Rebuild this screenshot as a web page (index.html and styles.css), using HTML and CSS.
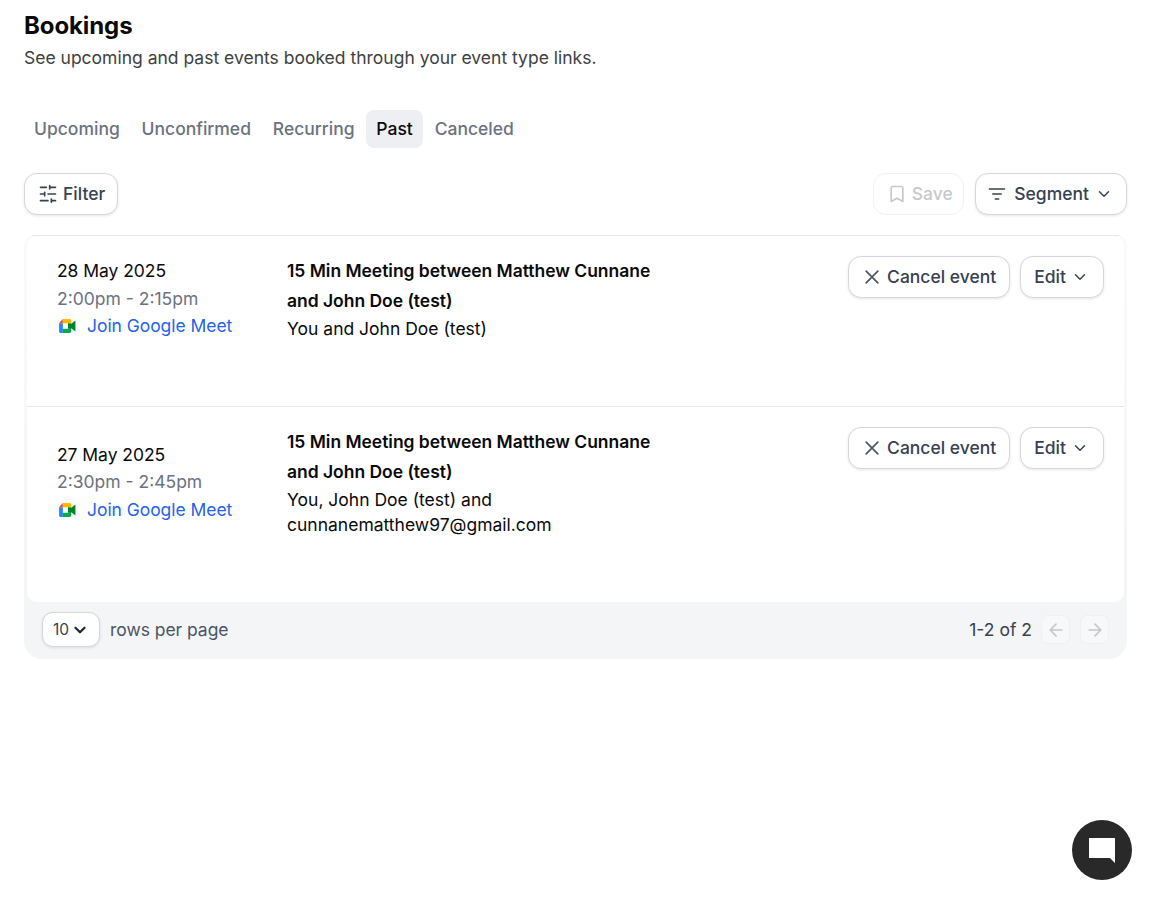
FILE: index.html
```html
<!DOCTYPE html>
<html lang="en">
<head>
<meta charset="utf-8">
<title>Bookings</title>
<link rel="stylesheet" href="styles.css">
</head>
<body>
<main class="page">
  <header class="head">
    <h1 class="title">Bookings</h1>
    <p class="subtitle">See upcoming and past events booked through your event type links.</p>
  </header>
  <nav class="tabs">
    <a class="tab">Upcoming</a>
    <a class="tab">Unconfirmed</a>
    <a class="tab">Recurring</a>
    <a class="tab active">Past</a>
    <a class="tab">Canceled</a>
  </nav>
  <div class="toolbar">
    <button class="btn filter">
      <svg class="ico" viewBox="0 0 24 24"><path d="M21 4h-7M10 4H3M21 12h-9M8 12H3M21 20h-5M12 20H3M14 2v4M8 10v4M16 18v4"/></svg>
      Filter
    </button>
    <div class="toolbar-right">
      <button class="btn save">
        <svg class="ico" viewBox="0 0 24 24"><path d="M19 21l-7-4-7 4V5a2 2 0 0 1 2-2h10a2 2 0 0 1 2 2z"/></svg>
        Save
      </button>
      <button class="btn segment">
        <svg class="ico" viewBox="0 0 24 24"><path d="M3 6h18M7 12h10M10 18h4"/></svg>
        Segment
        <svg class="chev" viewBox="0 0 24 24"><path d="M6 9l6 6 6-6"/></svg>
      </button>
    </div>
  </div>
  <section class="table">
    <div class="rule"></div>
    <div class="rows">
      <article class="row first">
        <div class="when">
          <div class="date">28 May 2025</div>
          <div class="time">2:00pm - 2:15pm</div>
          <a class="meet">
            <svg class="meet-ico" viewBox="0 0 18 15"><path fill="#2684fc" d="M0 4.500V13.500A1.500 1.500 0 0 0 1.500 15H4V4.500z"/><path fill="#ea4335" d="M4 0L0 4.500h4z"/><path fill="#ffba00" d="M4 0h7.500A1.500 1.500 0 0 1 13 1.500V5l-2.500 2-1-2.500H4z"/><path fill="#00ac47" d="M4 10.500h5.500l1-3L13 10v3.500a1.500 1.500 0 0 1-1.500 1.500H4z"/><path fill="#00832d" d="M9.500 4.500h1L13 5l4.500-3.500v12L13 10H9.500z"/></svg>
            Join Google Meet
          </a>
        </div>
        <div class="info">
          <h2 class="event">15 Min Meeting between Matthew Cunnane and John Doe (test)</h2>
          <p class="people">You and John Doe (test)</p>
        </div>
        <div class="actions">
          <button class="btn cancel"><svg class="ico x" viewBox="0 0 24 24"><path d="M5 5l14 14M19 5L5 19"/></svg>Cancel event</button>
          <button class="btn edit">Edit<svg class="chev" viewBox="0 0 24 24"><path d="M6 9l6 6 6-6"/></svg></button>
        </div>
      </article>
      <article class="row second">
        <div class="when">
          <div class="date">27 May 2025</div>
          <div class="time">2:30pm - 2:45pm</div>
          <a class="meet">
            <svg class="meet-ico" viewBox="0 0 18 15"><path fill="#2684fc" d="M0 4.500V13.500A1.500 1.500 0 0 0 1.500 15H4V4.500z"/><path fill="#ea4335" d="M4 0L0 4.500h4z"/><path fill="#ffba00" d="M4 0h7.500A1.500 1.500 0 0 1 13 1.500V5l-2.500 2-1-2.500H4z"/><path fill="#00ac47" d="M4 10.500h5.500l1-3L13 10v3.500a1.500 1.500 0 0 1-1.500 1.500H4z"/><path fill="#00832d" d="M9.500 4.500h1L13 5l4.500-3.500v12L13 10H9.500z"/></svg>
            Join Google Meet
          </a>
        </div>
        <div class="info">
          <h2 class="event">15 Min Meeting between Matthew Cunnane and John Doe (test)</h2>
          <p class="people">You, John Doe (test) and<br>cunnanematthew97@gmail.com</p>
        </div>
        <div class="actions">
          <button class="btn cancel"><svg class="ico x" viewBox="0 0 24 24"><path d="M5 5l14 14M19 5L5 19"/></svg>Cancel event</button>
          <button class="btn edit">Edit<svg class="chev" viewBox="0 0 24 24"><path d="M6 9l6 6 6-6"/></svg></button>
        </div>
      </article>
    </div>
    <footer class="pager">
      <div class="pager-left">
        <button class="btn size">10<svg class="chev bold" viewBox="0 0 24 24"><path d="M6 9l6 6 6-6"/></svg></button>
        <span class="per-page">rows per page</span>
      </div>
      <div class="pager-right">
        <span class="count">1-2 of 2</span>
        <button class="nav"><svg viewBox="0 0 24 24"><path d="M19 12H5M12 19l-7-7 7-7"/></svg></button>
        <button class="nav"><svg viewBox="0 0 24 24"><path d="M5 12h14M12 5l7 7-7 7"/></svg></button>
      </div>
    </footer>
  </section>
</main>
<button class="chat" aria-label="Chat">
  <svg viewBox="0 0 28 28"><path d="M1 2h26v25l-5-5H1z" fill="#fff"/></svg>
</button>
</body>
</html>
```

FILE: styles.css
```css
* { box-sizing: border-box; }
html, body { margin: 0; padding: 0; background: #fff; }
body {
  font-family: Inter, "Liberation Sans", sans-serif;
  font-size: 17.5px;
  color: #374151;
  height: 899px;
  overflow: hidden;
}
.page { padding: 11px 27px 0 24px; }
.title {
  margin: 0;
  font-size: 24px;
  line-height: 30px;
  font-weight: 700;
  color: #0a0a0a;
  letter-spacing: -0.1px;
}
.subtitle {
  margin: 2px 0 0;
  line-height: 30px;
  color: #404040;
}
.tabs { display: flex; gap: 1.800px; margin-top: 37px; }
.tab {
  height: 38px;
  line-height: 38px;
  padding: 0 10px;
  border-radius: 8px;
  color: #6b7280;
  font-weight: 500;
}
.active { background: #eeeff2; color: #0a0a0a; }
.toolbar {
  display: flex;
  justify-content: space-between;
  margin-top: 25px;
}
.toolbar-right { display: flex; gap: 11px; }
.btn {
  display: inline-flex;
  align-items: center;
  height: 42px;
  padding: 0 13px 1px;
  font: 500 17.5px Inter, "Liberation Sans", sans-serif;
  color: #374151;
  background: #fff;
  border: 1px solid #d5d7dd;
  border-radius: 13px;
  box-shadow: 0 1px 3px rgba(16, 24, 40, 0.10);
  cursor: pointer;
}
.btn svg { margin-top: 1px; }
.ico {
  width: 20px;
  height: 20px;
  fill: none;
  stroke: currentColor;
  stroke-width: 2;
  stroke-linecap: round;
  stroke-linejoin: round;
  flex: none;
}
.chev {
  width: 18px;
  height: 18px;
  fill: none;
  stroke: currentColor;
  stroke-width: 2;
  stroke-linecap: round;
  stroke-linejoin: round;
  flex: none;
}
.filter { gap: 5px; padding-right: 12px; }
.save {
  gap: 5px;
  color: #c8c9cc;
  border-color: #f1f1f3;
  box-shadow: none;
  width: 91.500px;
}
.segment { gap: 7px; padding: 0 13px 1px 11px; }
.segment .chev { margin-left: -1px; }
.table {
  margin-top: 20px;
  background: linear-gradient(#fafafb, #f4f5f7 300px);
  border-radius: 10px 10px 18px 18px;
  padding: 0 3px;
  height: 424px;
  width: 1103px;
}
.rule {
  height: 1px;
  margin: 0 5px;
  background: #e5e7eb;
}
.rows {
  background: #fff;
  border-radius: 10px;
  height: 366px;
}
.row {
  display: flex;
  padding-left: 30px;
}
.first { height: 170px; }
.second { height: 195px; border-top: 1px solid #e5e7eb; }
.when { width: 230px; flex: none; }
.date { color: #0a0a0a; line-height: 27.500px; letter-spacing: -0.050px; }
.time { color: #6b7280; line-height: 27.500px; }
.second .date { line-height: 27px; }
.second .meet { margin-top: 0.500px; }
.meet {
  display: flex;
  align-items: center;
  gap: 11px;
  padding-left: 2px;
  line-height: 27.500px;
  letter-spacing: -0.050px;
  color: #2563eb;
}
.meet-ico { width: 17px; height: 14px; flex: none; }
.first .when { padding-top: 21px; }
.second .when { padding-top: 34px; }
.info { width: 376px; flex: none; padding-top: 20px; }
.event {
  margin: 0;
  font-size: 17.5px;
  font-weight: 600;
  line-height: 30px;
  letter-spacing: -0.030px;
  color: #0a0a0a;
}
.people { margin: 0; line-height: 25px; color: #0a0a0a; }
.actions {
  margin-left: auto;
  display: flex;
  gap: 10px;
  padding: 20px 20px 0 0;
  align-items: flex-start;
}
.cancel { gap: 5px; }
.x { color: #4b5563; }
.edit { gap: 5px; padding-right: 14px; }
.pager {
  display: flex;
  justify-content: space-between;
  align-items: center;
  height: 57px;
  padding: 0 15px 2px;
  color: #4b5563;
}
.pager-left { display: flex; align-items: center; gap: 10px; }
.per-page { letter-spacing: -0.050px; }
.size {
  height: 35px;
  padding: 0 10px;
  gap: 2px;
  border-radius: 11px;
  font-size: 15.500px;
  font-weight: 400;
}
.bold { stroke-width: 3; color: #1f2937; }
.pager-right { display: flex; align-items: center; gap: 10px; }
.count { color: #374151; margin-right: -1px; }
.nav {
  width: 29px;
  height: 29px;
  padding: 3.500px;
  background: #f7f8f9;
  border: 1px solid #eff0f2;
  border-radius: 7px;
  display: flex;
}
.nav svg {
  width: 20px;
  height: 20px;
  fill: none;
  stroke: #c4c6c9;
  stroke-width: 2;
  stroke-linecap: round;
  stroke-linejoin: round;
}
.chat {
  position: fixed;
  left: 1072px;
  top: 820px;
  width: 60px;
  height: 60px;
  padding: 0;
  border: 0;
  border-radius: 50%;
  background: #292929;
  display: flex;
  align-items: center;
  justify-content: center;
}
.chat svg { width: 28px; height: 28px; }
```
